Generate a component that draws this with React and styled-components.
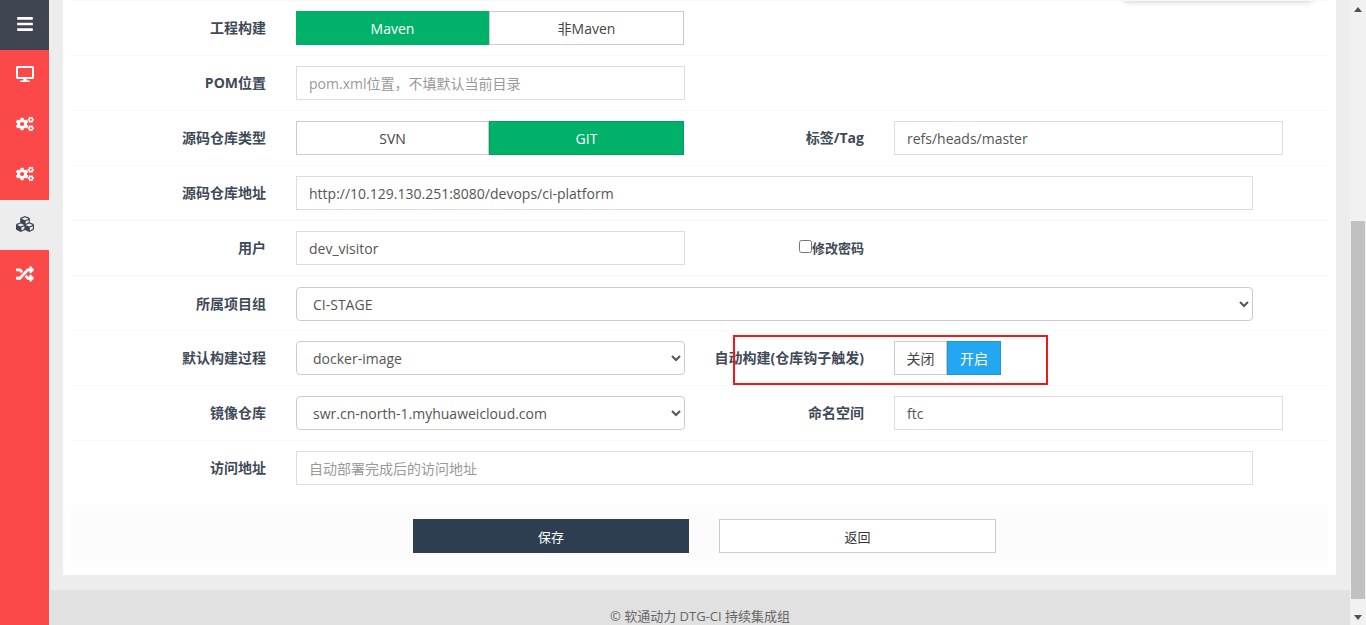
import React from 'react';
import styled, { createGlobalStyle } from 'styled-components';
import { FaBars, FaDesktop, FaCogs, FaCubes, FaRandom } from 'react-icons/fa';

const FONT = `"Open Sans", "Noto Sans CJK SC", sans-serif`;

const Global = createGlobalStyle`
  html, body { margin: 0; padding: 0; height: 625px; overflow: hidden; background: #ededed; }
  * { box-sizing: border-box; }
  body { font-family: ${FONT}; font-size: 14px; color: #555; }
`;

const Shell = styled.div`
  display: flex;
  width: 1366px;
  height: 625px;
  overflow: hidden;
`;

const Sidebar = styled.nav`
  width: 49px;
  flex: none;
  background: #fb4848;
  display: flex;
  flex-direction: column;
`;

const NavItem = styled.div`
  height: 50px;
  display: flex;
  align-items: center;
  justify-content: center;
  padding-bottom: 2px;
  font-size: 18px;
  color: ${p => (p.$active ? '#3a4454' : '#fff')};
  background: ${p => (p.$active ? '#ededed' : p.$dark ? '#3f4652' : 'transparent')};
`;

const Main = styled.main`
  width: 1301px;
  flex: none;
  margin-left: 0;
  display: flex;
  flex-direction: column;
`;

const Card = styled.section`
  position: relative;
  margin-left: 14px;
  width: 1273px;
  height: 575px;
  background: #fff;
  padding: 0 8px;
  flex: none;
`;

const Popup = styled.div`
  position: absolute;
  top: -20px;
  left: 1060px;
  width: 190px;
  height: 20px;
  background: #fff;
  box-shadow: 0 1px 6px rgba(0, 0, 0, 0.25);
  border-radius: 4px;
`;

const Row = styled.div`
  position: relative;
  height: 55px;
  border-top: 1px solid #f8f8f8;
  display: grid;
  grid-template-columns: 195px 389px 209px 389px;
  column-gap: 0;
  align-items: start;
  padding-top: ${p => p.$top ?? 10}px;
`;

const Label = styled.label`
  justify-self: end;
  font-weight: 700;
  font-size: 14px;
  line-height: 34px;
  color: #3f4a58;
  white-space: nowrap;
`;

const Field = styled.div`
  margin-left: 30px;
  display: flex;
  grid-column: ${p => (p.$wide ? '2 / 5' : 'auto')};
  width: ${p => (p.$wide ? 'auto' : '389px')};
`;

const FieldRight = styled(Field)`
  margin-left: 30px;
  width: 389px;
`;

const Spacer = styled.span``;

const TextInput = styled.input`
  width: 100%;
  height: 34px;
  border: 1px solid #ddd;
  border-radius: 0;
  padding: 0 12px;
  font-family: ${FONT};
  font-size: 14px;
  color: #555;
  background: #fff;
  outline: none;
  &::placeholder { color: #999; opacity: 1; }
`;

const Select = styled.select`
  width: 100%;
  height: 34px;
  border: 1px solid #ccc;
  border-radius: 4px;
  padding: 0 12px;
  font-family: ${FONT};
  font-size: 14px;
  color: #555;
  background: #fff;
  outline: none;
`;

const Toggle = styled.button`
  width: ${p => p.$w}px;
  height: 34px;
  flex: none;
  border: 1px solid ${p => p.$border || '#ccc'};
  margin-left: ${p => p.$ml || 0}px;
  background: ${p => p.$bg || '#fff'};
  color: ${p => (p.$bg ? '#fff' : '#444')};
  font-family: ${FONT};
  font-size: 14px;
  padding: 0;
`;

const CheckLabel = styled.label`
  grid-column: 3;
  justify-self: end;
  display: flex;
  align-items: center;
  font-weight: 700;
  font-size: 13px;
  line-height: 34px;
  color: #3f4a58;
  white-space: nowrap;
`;

const Check = styled.input`
  width: 13px;
  height: 13px;
  margin: 0;
  margin-top: -3px;
`;

const RedBox = styled.div`
  position: absolute;
  left: 662px;
  top: 4px;
  width: 315px;
  height: 50px;
  border: 2px solid #f01818;
  pointer-events: none;
`;

const Actions = styled.div`
  margin-top: 10px;
  height: 62px;
  background: #fcfcfc;
  display: flex;
  align-items: center;
  padding-left: 342px;
  gap: 30px;
`;

const ActionButton = styled.button`
  width: ${p => p.$w}px;
  height: 34px;
  border: 1px solid ${p => (p.$primary ? '#2c3e50' : '#ccc')};
  background: ${p => (p.$primary ? '#2c3e50' : '#fff')};
  color: ${p => (p.$primary ? '#fff' : '#333')};
  font-family: ${FONT};
  font-size: 13px;
  padding: 0;
`;

const Footer = styled.footer`
  margin-top: 15px;
  margin-left: 1px;
  width: 1300px;
  height: 60px;
  flex: none;
  background: #e1e1e1;
  padding-top: 17px;
  text-align: center;
  font-size: 13px;
  line-height: 18px;
  color: #666;
`;

const ScrollTrack = styled.div`
  position: relative;
  width: 16px;
  flex: none;
  background: #f1f1f1;
`;

const Thumb = styled.div`
  position: absolute;
  top: 221px;
  left: 1px;
  width: 14px;
  height: 378px;
  background: #c1c1c1;
`;

const Arrow = styled.svg`
  position: absolute;
  left: 4px;
  width: 8px;
  height: 5px;
  fill: #505050;
  ${p => (p.$down ? 'bottom: 5px;' : 'top: 7px;')}
`;

export default function App() {
  return (
    <Shell>
      <Global />
      <Sidebar>
        <NavItem $dark><FaBars /></NavItem>
        <NavItem><FaDesktop /></NavItem>
        <NavItem><FaCogs /></NavItem>
        <NavItem><FaCogs /></NavItem>
        <NavItem $active><FaCubes /></NavItem>
        <NavItem><FaRandom /></NavItem>
      </Sidebar>
      <Main>
        <Card>
          <Popup />
          <Row>
            <Label>工程构建</Label>
            <Field>
              <Toggle $w={193} $bg="#00b16a" $border="#00b16a">Maven</Toggle>
              <Toggle $w={195} $ml={0}>非Maven</Toggle>
            </Field>
          </Row>
          <Row>
            <Label>POM位置</Label>
            <Field><TextInput readOnly placeholder="pom.xml位置，不填默认当前目录" /></Field>
          </Row>
          <Row>
            <Label>源码仓库类型</Label>
            <Field>
              <Toggle $w={193}>SVN</Toggle>
              <Toggle $w={195} $bg="#00b16a" $border="#00a060">GIT</Toggle>
            </Field>
            <Label>标签/Tag</Label>
            <FieldRight><TextInput readOnly value="refs/heads/master" /></FieldRight>
          </Row>
          <Row>
            <Label>源码仓库地址</Label>
            <Field $wide><TextInput readOnly value="http://10.129.130.251:8080/devops/ci-platform" /></Field>
          </Row>
          <Row>
            <Label>用户</Label>
            <Field><TextInput readOnly value="dev_visitor" /></Field>
            <CheckLabel><Check type="checkbox" readOnly />修改密码</CheckLabel>
          </Row>
          <Row $top={11}>
            <Label>所属项目组</Label>
            <Field $wide><Select defaultValue="CI-STAGE"><option>CI-STAGE</option></Select></Field>
          </Row>
          <Row>
            <Label>默认构建过程</Label>
            <Field><Select defaultValue="docker-image"><option>docker-image</option></Select></Field>
            <Label>自动构建(仓库钩子触发)</Label>
            <FieldRight>
              <Toggle $w={53}>关闭</Toggle>
              <Toggle $w={54} $bg="#22a7f0" $border="#1a96dc">开启</Toggle>
            </FieldRight>
            <RedBox />
          </Row>
          <Row>
            <Label>镜像仓库</Label>
            <Field><Select defaultValue="swr"><option value="swr">swr.cn-north-1.myhuaweicloud.com</option></Select></Field>
            <Label>命名空间</Label>
            <FieldRight><TextInput readOnly value="ftc" /></FieldRight>
          </Row>
          <Row>
            <Label>访问地址</Label>
            <Field $wide><TextInput readOnly placeholder="自动部署完成后的访问地址" /></Field>
          </Row>
          <Actions>
            <ActionButton $w={276} $primary>保存</ActionButton>
            <ActionButton $w={277}>返回</ActionButton>
          </Actions>
        </Card>
        <Footer>© 软通动力 DTG-CI 持续集成组</Footer>
      </Main>
      <ScrollTrack>
        <Arrow viewBox="0 0 8 5"><path d="M4 0 8 5H0z" /></Arrow>
        <Thumb />
        <Arrow $down viewBox="0 0 8 5"><path d="M0 0h8L4 5z" /></Arrow>
      </ScrollTrack>
    </Shell>
  );
}
